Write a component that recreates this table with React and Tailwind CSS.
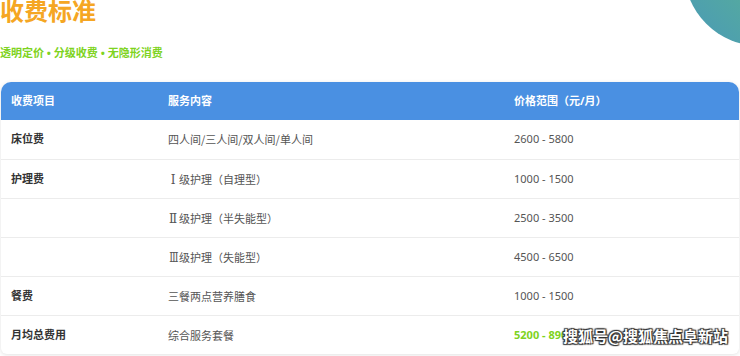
import React from "react";

const roman = (n) => (
  <span className="inline-block w-[10px] mr-px text-center leading-none">
    <span
      style={{ fontFamily: '"DejaVu Serif", "Liberation Serif", serif' }}
      className={`inline-block text-[12px] leading-none ${n === "Ⅲ" ? "scale-x-[0.8]" : ""}`}
    >
      {n}
    </span>
  </span>
);

const rows = [
  { label: "床位费", service: "四人间/三人间/双人间/单人间", price: "2600 - 5800" },
  { label: "护理费", num: "Ⅰ", service: "级护理（自理型）", price: "1000 - 1500" },
  { label: "", num: "Ⅱ", service: "级护理（半失能型）", price: "2500 - 3500" },
  { label: "", num: "Ⅲ", service: "级护理（失能型）", price: "4500 - 6500" },
  { label: "餐费", service: "三餐两点营养膳食", price: "1000 - 1500" },
  { label: "月均总费用", service: "综合服务套餐", price: "5200 - 8900", highlight: true },
];

export default function App() {
  return (
    <div
      className="relative w-[740px] h-[356px] overflow-hidden bg-white"
      style={{ fontFamily: '"Noto Sans", "Noto Sans CJK SC", sans-serif' }}
    >
      <div className="absolute left-[684px] top-[-106px] w-[152px] h-[152px] rounded-full bg-gradient-to-tr from-[#4a98b8] to-[#6cc46a]" />
      <div className="relative">
        <h1 className="text-[24px] leading-[24px] font-bold text-[#f5a623] -mt-[1px]">收费标准</h1>
        <p className="mt-[23px] text-[11px] leading-[14px] font-bold text-[#7ed321]">
          透明定价 • 分级收费 • 无隐形消费
        </p>
        <div className="mt-[22px] ml-px w-[738px] rounded-t-[10px] rounded-b-[6px] bg-white shadow-[0_1px_4px_rgba(0,0,0,0.12)] overflow-hidden">
          <div className="flex h-[38px] items-center bg-[#4a90e2] text-white text-[11px] font-bold">
            <div className="w-[157px] pl-[10px]">收费项目</div>
            <div className="w-[346px] pl-[10px]">服务内容</div>
            <div className="flex-1 pl-[10px]">价格范围（元/月）</div>
          </div>
          {rows.map((r, i) => (
            <div
              key={i}
              className={`flex h-[39px] items-center text-[11px] ${i > 0 ? "border-t border-[#ececec]" : ""}`}
            >
              <div className="w-[157px] pl-[10px] font-bold text-[#333]">{r.label}</div>
              <div
                className="w-[346px] pl-[10px] text-[#555]"
                style={{ fontFamily: '"Noto Sans CJK SC", sans-serif' }}
              >
                {r.num ? roman(r.num) : null}
                {r.service}
              </div>
              <div className={`flex-1 pl-[10px] ${r.highlight ? "font-bold text-[#7ed321]" : "text-[#555]"}`}>
                {r.price}
              </div>
            </div>
          ))}
        </div>
      </div>
      <div
        className="absolute left-[563px] top-[327px] whitespace-nowrap text-[15px] leading-[18px] font-bold text-white"
        style={{
          fontFamily: '"Noto Sans CJK SC", sans-serif',
          textShadow: "0 0 1px #333, 1px 1px 1px #333, -1px -1px 1px #333, 1px -1px 1px #333, -1px 1px 1px #333",
        }}
      >
        搜狐号@搜狐焦点阜新站
      </div>
    </div>
  );
}
